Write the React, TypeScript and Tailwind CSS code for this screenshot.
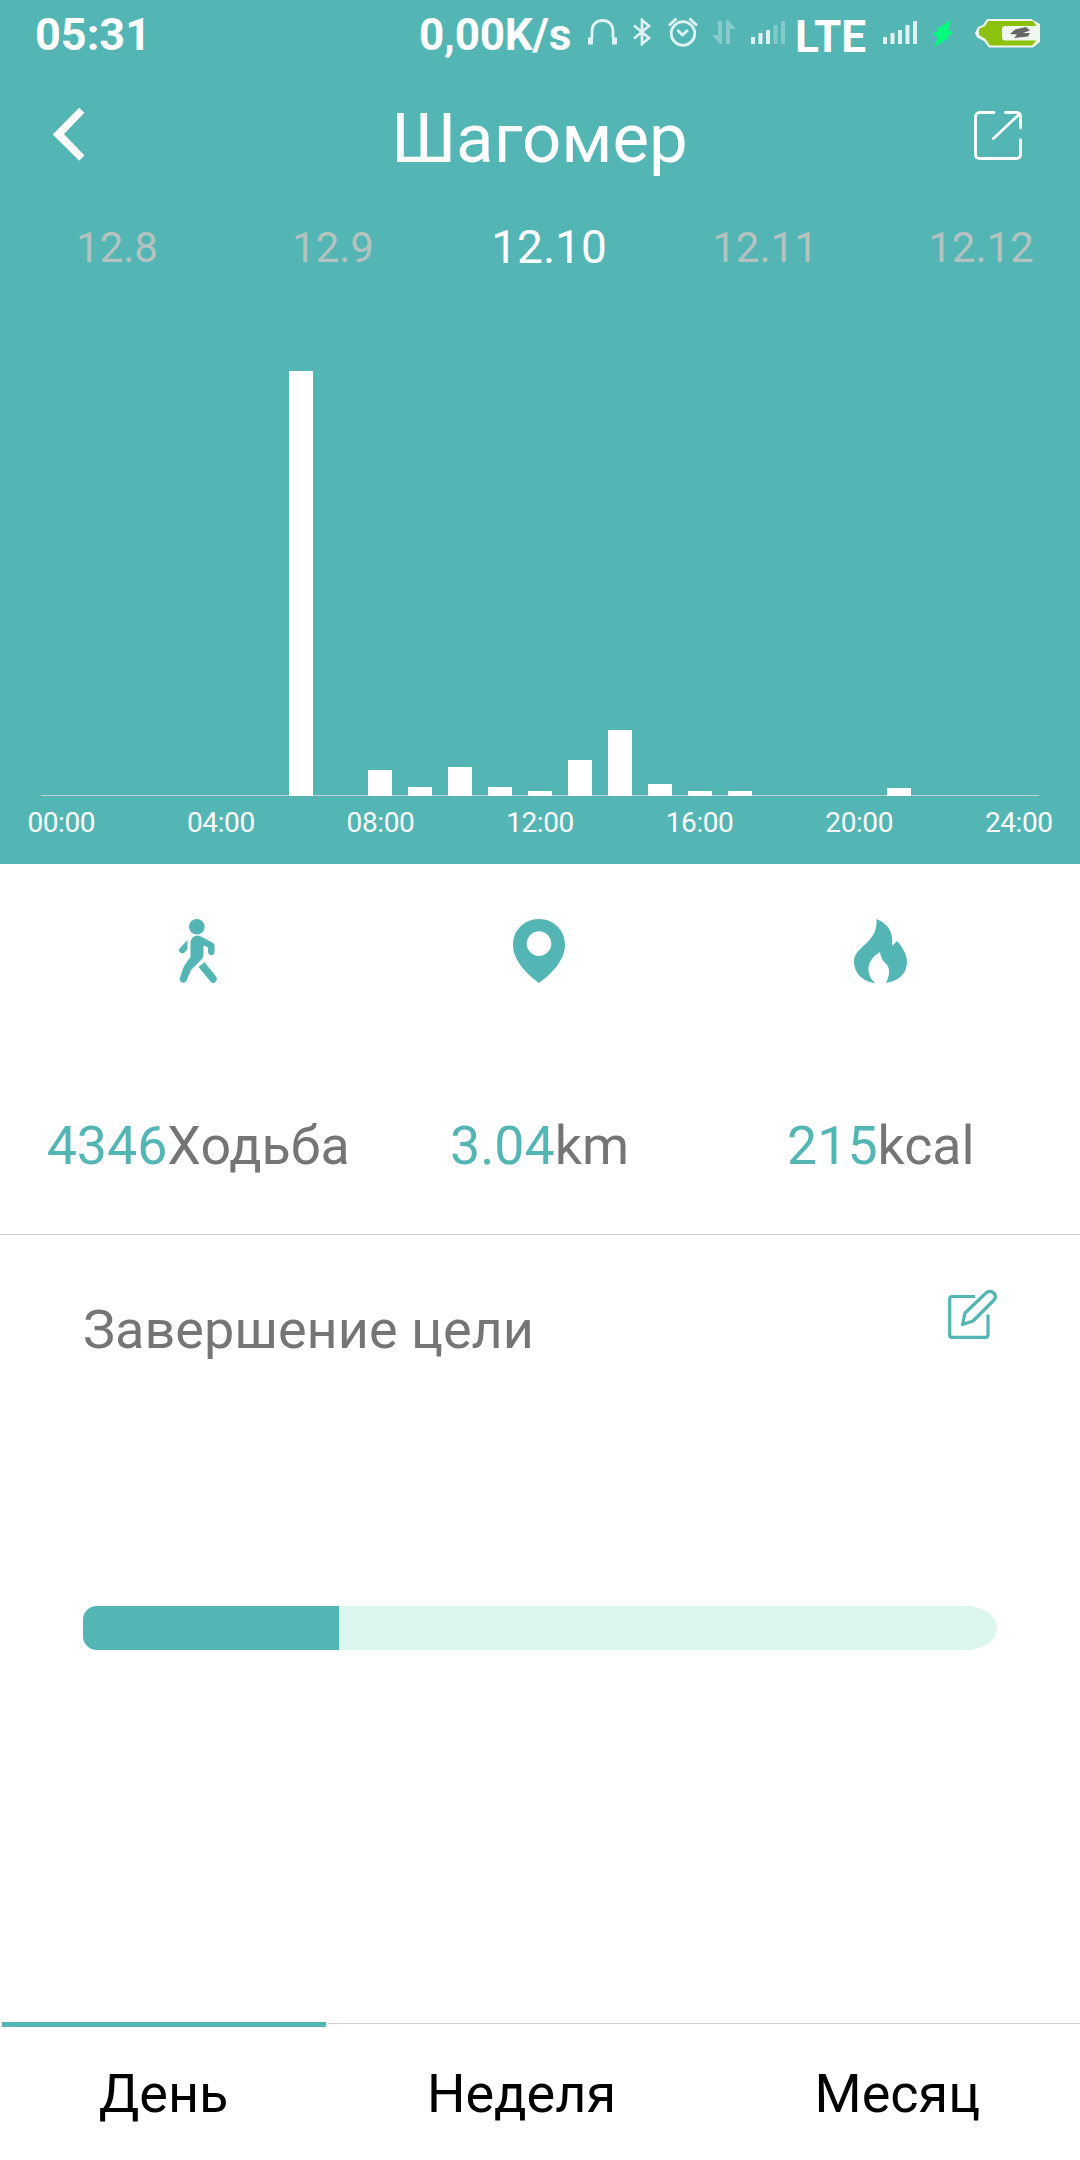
import React, { useState } from 'react';

const DATES = ['12.8', '12.9', '12.10', '12.11', '12.12'];

// One value per hour, 00:00 - 24:00
const STEPS = [0, 0, 0, 0, 0, 0, 425, 0, 26, 9, 29, 9, 5, 36, 66, 12, 5, 5, 0, 0, 0, 8, 0, 0, 0];

const HOURS = ['00:00', '04:00', '08:00', '12:00', '16:00', '20:00', '24:00'];

const TABS = ['День', 'Неделя', 'Месяц'];

const SignalIcon: React.FC<{ level: number }> = ({ level }) => (
  <svg className="w-[34px] h-6" viewBox="0 0 34 24" fill="#fff">
    {[7, 11, 14, 19, 23].map((h, i) => (
      <rect key={i} x={i * 7.5} y={24 - h} width="4" height={h} opacity={i < level ? 0.82 : 0.28} />
    ))}
  </svg>
);

const StatusBar: React.FC = () => (
  <div className="flex h-[70px] items-start pl-[35px] font-bold text-white">
    <span className="mt-2 w-[384px] text-[45px] leading-[54px]">05:31</span>
    <span className="mt-2 w-[169px] whitespace-nowrap text-[44px] leading-[54px] tracking-[-0.2px]">0,00K/s</span>
    <svg className="mt-[19px] w-[29px] h-[27px]" viewBox="0 0 29 27" fill="none" stroke="#fff" opacity="0.82">
      <path d="M4 19V12C4 5.500 8.500 1.500 14.500 1.500S25 5.500 25 12V19" strokeWidth="2.800" />
      <path d="M2.500 18.500V25.500M26.500 18.500V25.500" strokeWidth="5" strokeLinecap="butt" />
    </svg>
    <svg className="mt-[18px] ml-4 w-[18px] h-[28px]" viewBox="0 0 18 28" fill="none" stroke="#fff" strokeWidth="2.700" opacity="0.82">
      <path d="M1 7.500L16 20L9 26V2L16 8L1 20.500" />
    </svg>
    <svg className="mt-[17px] ml-[17px] w-[30px] h-[30px]" viewBox="0 0 30 30" fill="none" stroke="#fff" strokeWidth="2.800" opacity="0.82">
      <circle cx="15" cy="16.500" r="11.800" />
      <path d="M9.500 13L14.500 18L20 13" />
      <path d="M1 8.500L8.500 1.500M29 8.500L21.500 1.500" />
    </svg>
    <svg className="mt-[20px] ml-[14px] w-6 h-6" viewBox="0 0 24 24" fill="#fff" opacity="0.3">
      <path d="M6 1H10V24H8L0 15H6Z" />
      <path d="M18 24H14V0H16L24 9H18Z" />
    </svg>
    <span className="mt-[20px] ml-[15px]">
      <SignalIcon level={3} />
    </span>
    <span className="mt-[10px] ml-[10px] w-[72px] text-[44px] leading-[54px]">LTE</span>
    <span className="mt-[20px] ml-[16px]">
      <SignalIcon level={5} />
    </span>
    <svg className="mt-[20px] ml-[15px] w-[21px] h-[27px]" viewBox="0 0 21 27" fill="#00ff7b">
      <path d="M19 0L5 9L6 11.500L0 13.500L6 17L3 26.500L17 18L15 16.500L21 13L16 9.500Z" />
    </svg>
    <svg className="mt-[19px] ml-[22px] w-[66px] h-[29px]" viewBox="0 0 66 29">
      <path d="M12 0H56L65 5V23L58 28.500H14L9 22L2 18.500L0 14L3 8L8 6Z" fill="#f0f5ee" />
      <path d="M13 2H58L61.500 7H30Q27 7 27 10V18Q27 21.500 30 21.500H61.500L57 26.500H15L10.500 20L4 16V10L10 7Z" fill="#8cc20d" />
      <path d="M51 8L40 10.500L35 15L42 15.500L39 19L53 17.500L55 14H48L55 11.500Z" fill="#666" />
    </svg>
  </div>
);

const StepsChart: React.FC = () => (
  <div className="px-[41px]">
    <div className="flex h-[521px] items-end pl-[0.250px] shadow-[inset_0_-1px_0_#c0d2ce]">
      {STEPS.map((value, i) => (
        <div key={i} className="flex flex-1 justify-center">
          <div className="w-6 bg-white" style={{ height: value }} />
        </div>
      ))}
    </div>
    <div className="-mx-[59.500px] mt-[10px] flex text-center text-[28px] leading-[34px] tracking-[-0.4px] text-white">
      {HOURS.map((hour) => (
        <span key={hour} className="flex-1">{hour}</span>
      ))}
    </div>
  </div>
);

const WalkIcon = (
  <svg className="w-[38px] h-16" viewBox="0 0 38 64" fill="#53b6b5">
    <circle cx="17.800" cy="7.800" r="7.800" />
    <path d="M15 17.500Q18.500 15.500 22 17.500L34 24Q35.500 25 35.500 27V33Q35.500 36 32.500 36T29 33V28.500L24.500 26.500V36Q24.500 38 23 40L12 51L7.500 61.500Q6 64.500 3 63.500T0.800 59L5 47L11.500 38V24Q11.500 19.500 15 17.500Z" />
    <path d="M8.500 21V30L6 33Q3.500 35.500 1.200 33.500T1 29Z" />
    <path d="M19.500 48L25.500 43L37 57.500Q39 60.500 36.500 63T31.500 62.500Z" />
  </svg>
);

const PinIcon = (
  <svg className="w-[52px] h-16" viewBox="0 0 52 64" fill="#53b6b5" fillRule="evenodd">
    <path d="M26 0C40.500 0 52 11 52 26C52 40 40 54 26 64C12 54 0 40 0 26C0 11 11.500 0 26 0ZM26 12.300A12.300 12.300 0 1 0 26 36.900A12.300 12.300 0 1 0 26 12.300Z" />
  </svg>
);

const FlameIcon = (
  <svg className="w-[53px] h-16" viewBox="0 0 53 64" fill="#53b6b5">
    <path d="M22.500 0C34 4.500 40 14 38 27L43 22C49 28.500 53 36 53 43C53 55 44 62 32 64C35 58 36 52 34 47.500C32 43.500 27 42 26 33C17.500 38 14 45 14.500 51C15 57 17.500 61 21.500 64C9 63 0 54 0 42.500C0 27 24 25 22.500 0Z" />
  </svg>
);

const STATS = [
  { icon: WalkIcon, value: '4346', unit: 'Ходьба' },
  { icon: PinIcon, value: '3.04', unit: 'km' },
  { icon: FlameIcon, value: '215', unit: 'kcal' },
];

const App: React.FC = () => {
  const [tab, setTab] = useState(0);
  const [date, setDate] = useState(2);

  return (
    <div className="flex h-[2160px] w-[1080px] flex-col overflow-hidden bg-white font-['Roboto',sans-serif]">
      <header className="h-[864px] bg-[#53b6b5]">
        <StatusBar />
        <div className="flex h-[141px] items-start justify-between pl-[52px] pr-[58px]">
          <button className="mt-[37px] flex w-12" aria-label="Назад">
            <svg className="w-[33px] h-[54px]" viewBox="0 0 33 54" fill="#fff">
              <path d="M27.200 0.700L32.400 5.700L12 27L32.400 48.500L27.200 53.700L0.700 27.500Z" />
            </svg>
          </button>
          <h1 className="mt-[27px] pl-[5px] text-[69px] leading-[84px] text-white">Шагомер</h1>
          <button className="mt-[41px]" aria-label="Поделиться">
            <svg className="w-12 h-[49px]" viewBox="0 0 48 49" fill="none" stroke="#fff" strokeWidth="2.800" strokeLinecap="round" strokeLinejoin="round">
              <path d="M20 1.500H6Q1.500 1.500 1.500 6V43Q1.500 47.500 6 47.500H42Q46.500 47.500 46.500 43V29" />
              <path d="M31.500 1.500H42Q46.500 1.500 46.500 6V17M45 3.500L19.500 27.500" />
            </svg>
          </button>
        </div>
        <div className="flex h-[64px] items-center pl-[9px] -mr-[9px]">
          {DATES.map((d, i) => (
            <button
              key={d}
              onClick={() => setDate(i)}
              className={`mt-[9px] w-[216px] shrink-0 text-center ${i === date ? 'text-[46px] text-white' : 'text-[42px] text-[#b5c3c0]'}`}
            >
              {d}
            </button>
          ))}
        </div>
        <StepsChart />
      </header>

      <section className="flex h-[371px] border-b border-[#c8c8c8] pl-[27px] pr-[29px] pt-[55px]">
        {STATS.map(({ icon, value, unit }) => (
          <div key={unit} className="flex flex-1 flex-col items-center">
            {icon}
            <p className="mt-[131px] whitespace-nowrap pl-px text-[53.700px] leading-[64px] text-[#757575]">
              <span className="text-[#53b6b5]">{value}</span>{unit}
            </p>
          </div>
        ))}
      </section>

      <section className="flex-1 px-[83px]">
        <div className="flex items-start justify-between">
          <h2 className="mt-[63px] text-[54px] leading-[64px] text-[#757575]">Завершение цели</h2>
          <button className="mt-[55px]" aria-label="Изменить">
            <svg className="w-[49px] h-[49px]" viewBox="0 0 49 49" fill="none" stroke="#53b6b5" strokeWidth="3.200" strokeLinejoin="round">
              <path d="M27 6.500H4Q1.700 6.500 1.700 9V45Q1.700 47.300 4 47.300H37.500Q40 47.300 40 45V24.500" />
              <path d="M14.500 34.500L17 23L38 3Q42 -0.500 45.500 3T46 10L25 31Z" />
            </svg>
          </button>
        </div>
        <div className="mt-[244px] h-11 overflow-hidden rounded-l-[14px] rounded-r-[30px_22px] bg-[#dcf6ed]">
          <div className="h-full w-[28%] bg-[#53b6b5]" />
        </div>
      </section>

      <nav className="flex h-[138px] text-[54px] leading-[64px] text-black">
        {TABS.map((label, i) => (
          <button key={label} onClick={() => setTab(i)} className="flex flex-auto flex-col items-stretch">
            <span className="flex h-[5px] items-start">
              {i === tab ? (
                <span className="mx-0.5 h-[5px] flex-1 bg-[#53b6b5]" />
              ) : (
                <span className="mt-px h-px flex-1 bg-[#cfcfcf]" />
              )}
            </span>
            <span className="mt-[35px] -ml-px">{label}</span>
          </button>
        ))}
      </nav>
    </div>
  );
};

export default App;
